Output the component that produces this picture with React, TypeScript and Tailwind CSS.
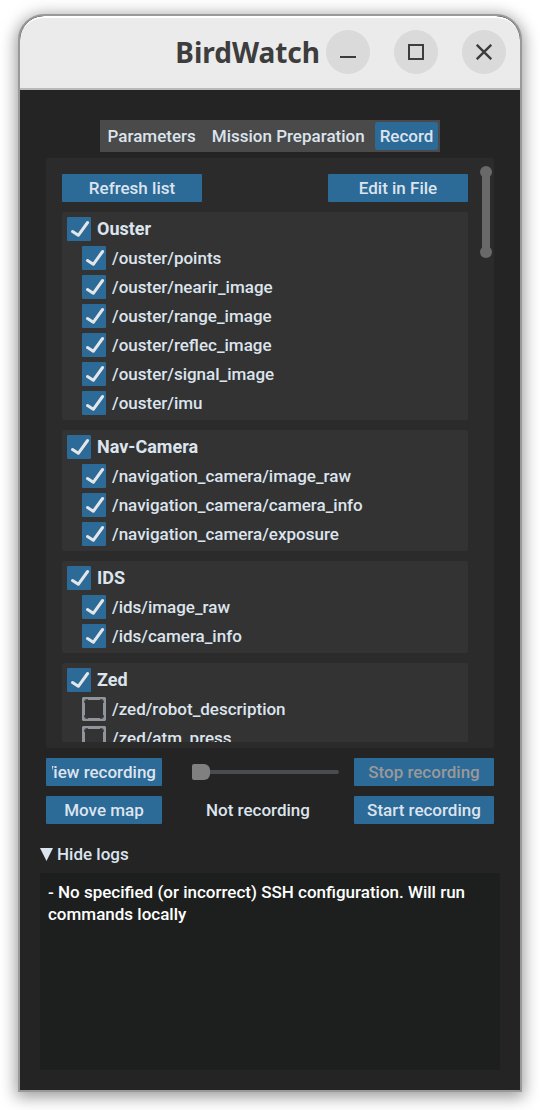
import { useState } from "react";

type Topic = { name: string; on: boolean };
type Group = { name: string; topics: Topic[] };

const on = (name: string): Topic => ({ name, on: true });
const off = (name: string): Topic => ({ name, on: false });

const groups: Group[] = [
  {
    name: "Ouster",
    topics: [
      on("/ouster/points"),
      on("/ouster/nearir_image"),
      on("/ouster/range_image"),
      on("/ouster/reflec_image"),
      on("/ouster/signal_image"),
      on("/ouster/imu"),
    ],
  },
  {
    name: "Nav-Camera",
    topics: [
      on("/navigation_camera/image_raw"),
      on("/navigation_camera/camera_info"),
      on("/navigation_camera/exposure"),
    ],
  },
  { name: "IDS", topics: [on("/ids/image_raw"), on("/ids/camera_info")] },
  { name: "Zed", topics: [off("/zed/robot_description"), off("/zed/atm_press")] },
];

function Check({ label, checked, bold }: { label: string; checked: boolean; bold?: boolean }) {
  return (
    <label className={bold ? "flex h-6 items-center gap-1.5 text-[18px] font-bold" : "flex h-6 items-center gap-1.5 pl-[15px] font-medium"}>
      <span className="grid size-6 shrink-0">
        <input
          type="checkbox"
          defaultChecked={checked}
          className="peer col-start-1 row-start-1 size-6 appearance-none rounded-[1px] checked:bg-[#2c6a98]"
        />
        <svg viewBox="0 0 24 24" className="pointer-events-none col-start-1 row-start-1 hidden size-6 peer-checked:block" fill="none" stroke="#e4e6e8" strokeWidth="3" strokeLinecap="round" strokeLinejoin="round">
          <path d="M5.500 14.500 L11.300 18.300 L20.600 5.500" />
        </svg>
        <svg viewBox="0 0 24 24" className="pointer-events-none col-start-1 row-start-1 size-6 peer-checked:hidden">
          <path fill="#8f959b" fillRule="evenodd" d="M1 0H23L24 1V23L23 24H1L0 23V1Z M3 6V18L2 20L4 22L6 21H18L20 22L22 20L21 18V6L22 4L20 2L18 3H6L4 2L2 4Z" />
          <path fill="none" stroke="#4c4e51" strokeWidth="1" d="M2.500 6V4.500L4.500 2.500H6 M18 2.500H19.500L21.500 4.500V6 M21.500 18V19.500L19.500 21.500H18 M6 21.500H4.500L2.500 19.500V18" />
        </svg>
      </span>
      <span className="whitespace-nowrap">{label}</span>
    </label>
  );
}

const button = "flex h-7 items-center justify-center whitespace-nowrap rounded-[1px] bg-[#2c6a98] font-medium";

export default function App() {
  const [showLogs, setShowLogs] = useState(true);
  const [tab, setTab] = useState("Record");

  return (
    <div className="flex h-screen flex-col bg-white px-[18px] pt-[14px] pb-[18px] font-['Roboto',sans-serif] text-[17px] leading-[22px] text-[#dce4ee]">
      <div className="flex min-h-0 flex-1 flex-col overflow-hidden rounded-t-[26px] border-2 border-[#999999] bg-[#242424] shadow-[0_3px_16px_2px_rgba(0,0,0,0.4)]">
        <header className="flex h-[74px] shrink-0 items-center justify-end rounded-t-[24px] border-t-2 border-b-2 border-t-white border-b-[#b8bab8] bg-[#ebebeb] pr-3.5 pb-0.5 text-[#3d3d3d]">
          <h1 className="mr-1.5 font-['Noto_Sans',sans-serif] text-[28px] font-bold leading-8">BirdWatch</h1>
          <div className="flex gap-6">
            <button aria-label="Minimize" className="grid size-11 place-items-center rounded-full bg-[#dadada]">
              <svg viewBox="0 0 16 16" className="size-4"><path fill="currentColor" d="M0 12H16V14H0Z" /></svg>
            </button>
            <button aria-label="Maximize" className="grid size-11 place-items-center rounded-full bg-[#dadada]">
              <svg viewBox="0 0 16 16" className="size-4"><path fill="none" stroke="currentColor" strokeWidth="2" d="M1 1H15V15H1Z" /></svg>
            </button>
            <button aria-label="Close" className="grid size-11 place-items-center rounded-full bg-[#dadada]">
              <svg viewBox="0 0 16 16" className="size-4"><path fill="none" stroke="currentColor" strokeWidth="2.400" d="M.8 .8L15.200 15.200M15.200 .8L.8 15.200" /></svg>
            </button>
          </div>
        </header>

        <main className="flex min-h-0 flex-1 flex-col px-5 pt-[30px] pb-5">
          <nav className="flex h-8 shrink-0 items-center self-center bg-[#4a4a4a]">
            {["Parameters", "Mission Preparation", "Record"].map((name) => (
              <button
                key={name}
                onClick={() => setTab(name)}
                className={
                  tab === name
                    ? "mx-0.5 h-7 whitespace-nowrap rounded-[3px] bg-[#2c6a98] px-[5px] font-medium"
                    : "mx-0.5 h-7 whitespace-nowrap rounded-[3px] px-1.5 font-medium"
                }
              >
                {name}
              </button>
            ))}
          </nav>

          <section className="mx-1.5 mt-1.5 flex min-h-0 flex-1 rounded-[2px] bg-[#2b2b2b] py-1.5 pr-0.5 pl-4">
            <div className="min-w-0 flex-1 overflow-y-auto pt-2.5 [scrollbar-width:none]">
              <div className="flex justify-between">
                <button className={`${button} w-[140px]`}>Refresh list</button>
                <button className={`${button} w-[140px]`}>Edit in File</button>
              </div>
              <div className="mt-2.5 flex flex-col gap-2.5">
                {groups.map((g) => (
                  <div key={g.name} className="flex flex-col gap-[5px] rounded-[2px] bg-[#333333] p-[5px]">
                    <Check label={g.name} checked bold />
                    {g.topics.map((t) => (
                      <Check key={t.name} label={t.name} checked={t.on} />
                    ))}
                  </div>
                ))}
              </div>
            </div>
            <div className="mt-0.5 ml-3 flex h-[92px] w-3 flex-col items-center" aria-hidden="true">
              <div className="size-3 shrink-0 rounded-full bg-[#696969]" />
              <div className="-my-1.5 w-2 flex-1 bg-[#696969]" />
              <div className="size-3 shrink-0 rounded-full bg-[#696969]" />
            </div>
          </section>

          <div className="mx-1.5 mt-2.5 grid shrink-0 grid-cols-[116px_1fr_140px] items-center gap-y-2.5">
            <button className={`${button} px-1.5`}>
              <span className="flex w-full justify-end overflow-hidden">View recording</span>
            </button>
            <input
              type="range"
              aria-label="Recording position"
              defaultValue={0}
              className="mr-[15px] ml-[30px] h-4 min-w-0 appearance-none bg-transparent [&::-webkit-slider-runnable-track]:h-1 [&::-webkit-slider-runnable-track]:rounded-full [&::-webkit-slider-runnable-track]:bg-[#4a4d50] [&::-webkit-slider-thumb]:-mt-1.5 [&::-webkit-slider-thumb]:h-4 [&::-webkit-slider-thumb]:w-[18px] [&::-webkit-slider-thumb]:appearance-none [&::-webkit-slider-thumb]:rounded-l-[2px] [&::-webkit-slider-thumb]:rounded-r-[6px] [&::-webkit-slider-thumb]:bg-[#808080]"
            />
            <button disabled className={`${button} text-[#999999]`}>Stop recording</button>
            <button className={button}>Move map</button>
            <span className="text-center font-medium">Not recording</span>
            <button className={button}>Start recording</button>
          </div>

          <button
            aria-expanded={showLogs}
            onClick={() => setShowLogs(!showLogs)}
            className="mt-[19px] flex shrink-0 items-center gap-1 self-start font-medium"
          >
            <svg viewBox="0 0 13 13" className="size-[13px]"><path fill="currentColor" d="M0 0H13L6.500 13Z" /></svg>
            Hide logs
          </button>
          {showLogs && (
            <div role="log" className="mt-2 h-[197px] shrink-0 bg-[#1d1f1e] p-2 font-medium text-white">
              - No specified (or incorrect) SSH configuration. Will run commands locally
            </div>
          )}
        </main>
      </div>
    </div>
  );
}
